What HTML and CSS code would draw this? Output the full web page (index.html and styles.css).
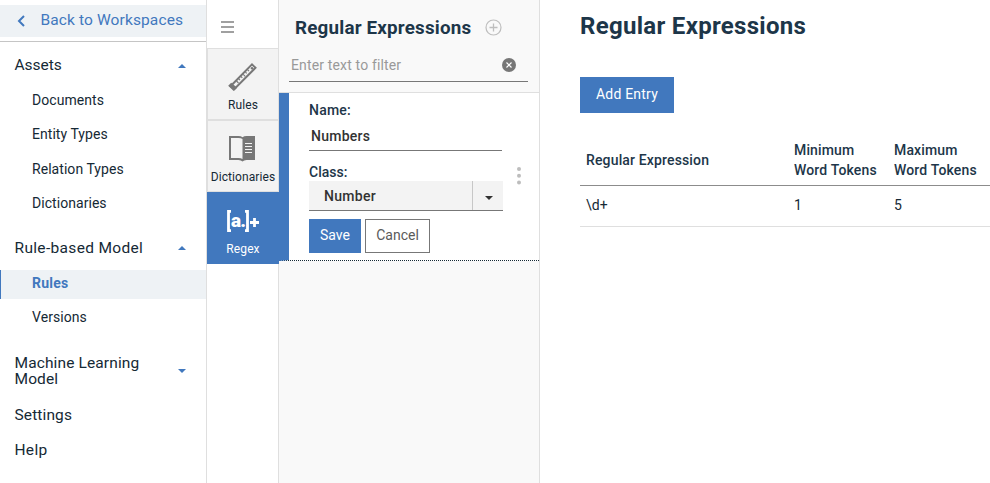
FILE: index.html
```html
<!DOCTYPE html>
<html lang="en">
<head>
<meta charset="utf-8">
<title>Regular Expressions</title>
<link rel="stylesheet" href="styles.css">
</head>
<body>
<div class="app">
  <nav class="sidebar">
    <a class="back"><svg class="chev" width="8" height="12" viewBox="0 0 8 12"><path d="M7 1 2 6l5 5" fill="none" stroke="#4178be" stroke-width="2"/></svg><span>Back to Workspaces</span></a>
    <div class="menu">
      <div class="head assets"><span>Assets</span><i class="caret up"></i></div>
      <ul>
        <li>Documents</li>
        <li>Entity Types</li>
        <li>Relation Types</li>
        <li>Dictionaries</li>
      </ul>
      <div class="head rb"><span>Rule-based Model</span><i class="caret up"></i></div>
      <ul>
        <li class="active">Rules</li>
        <li>Versions</li>
      </ul>
      <div class="head ml"><span>Machine Learning Model</span><i class="caret down"></i></div>
      <div class="head settings"><span>Settings</span></div>
      <div class="head help"><span>Help</span></div>
    </div>
  </nav>

  <div class="tabs">
    <div class="burger"><svg width="13" height="12" viewBox="0 0 13 12"><path d="M0 1h13M0 6h13M0 11h13" stroke="#a0a0a0" stroke-width="2"/></svg></div>
    <div class="tab t-rules">
      <svg width="32" height="32" viewBox="0 0 32 32"><path d="M3.500 25.200 25 3.300l3.500 3.500L7.200 28.200Z" fill="#f3f3f3" stroke="#777" stroke-width="2"/><path d="m1.200 24.700 3-3 6 5-3.500 3.300Z" fill="#777"/><path d="m9.500 20 2 2m.2-4.200 1.300 1.300m1-3.600 1.300 1.300m.9-3.500 2 2m.2-4.200 1.300 1.300m1-3.600 1.300 1.300" stroke="#777" stroke-width="1.100"/><circle cx="25" cy="7.200" r="1.200" fill="#777"/></svg>
      <span>Rules</span>
    </div>
    <div class="tab t-dict">
      <svg width="32" height="32" viewBox="0 0 32 32"><path d="M4 4h8q2.500 0 4 1.500V27q-1.500-1.500-4-1.500H4Z" fill="#f3f3f3"/><path d="M2 3h9.500q2.500 0 4 1.300Q17 3 19.500 3H28v24h-8.500q-2.500 0-4 1.500-1.500-1.500-4-1.500H2Zm2 2v20h7.500q2.500 0 4 1V6q-1.500-1-4-1Z" fill="#777"/><path d="M18 10.500h7m-7 3h7m-7 3h7m-7 3h7" stroke="#f3f3f3"/></svg>
      <span>Dictionaries</span>
    </div>
    <div class="tab t-regex">
      <div class="rx"><svg width="4" height="22" viewBox="0 0 4 22"><path d="M4 1.300H1.500v19.400H4" fill="none" stroke="#fff" stroke-width="2.800"/></svg><b>a.</b><svg width="4" height="22" viewBox="0 0 4 22"><path d="M0 1.300h2.500v19.400H0" fill="none" stroke="#fff" stroke-width="2.800"/></svg><svg class="plus" width="9" height="9" viewBox="0 0 9 9"><path d="M4.500 0v9M0 4.500h9" stroke="#fff" stroke-width="2.800"/></svg></div>
      <span>Regex</span>
    </div>
  </div>

  <section class="panel">
    <header class="ptop">
      <div class="ptitle"><h2>Regular Expressions</h2><svg width="17" height="17" viewBox="0 0 17 17"><circle cx="8.500" cy="8.500" r="7.500" fill="none" stroke="#bebebe" stroke-width="1.200"/><path d="M8.500 4.500v8M4.500 8.500h8" stroke="#bebebe" stroke-width="1.300"/></svg></div>
      <div class="filter"><span>Enter text to filter</span><svg width="14" height="14" viewBox="0 0 14 14"><circle cx="7" cy="7" r="7" fill="#777"/><path d="m4.500 4.500 5 5m0-5-5 5" stroke="#fff" stroke-width="1.200"/></svg></div>
    </header>
    <div class="entry">
      <div class="form">
        <label>Name:</label>
        <div class="input">Numbers</div>
        <label class="cl">Class:</label>
        <div class="select"><span>Number</span><div class="drop"><i class="caret dark"></i></div></div>
        <div class="btns"><div class="btn save">Save</div><div class="btn cancel">Cancel</div></div>
      </div>
      <svg class="dots" width="4" height="18" viewBox="0 0 4 18"><g fill="#bdbdbd"><circle cx="2" cy="2" r="2"/><circle cx="2" cy="8.700" r="2"/><circle cx="2" cy="15.400" r="2"/></g></svg>
    </div>
  </section>

  <main>
    <h1>Regular Expressions</h1>
    <div class="add">Add Entry</div>
    <div class="row th"><div>Regular Expression</div><div>Minimum<br>Word Tokens</div><div>Maximum<br>Word Tokens</div></div>
    <div class="row td"><div>\d+</div><div>1</div><div>5</div></div>
  </main>
</div>
</body>
</html>
```
FILE: styles.css
```css
* { box-sizing: border-box; }
body { margin: 0; font-family: Roboto, "Open Sans", sans-serif; color: #152935; background: #fff; }
h1, h2, ul { margin: 0; padding: 0; list-style: none; }
svg { display: block; flex: none; }
.app { display: flex; height: 483px; overflow: hidden; }

.sidebar { width: 207px; flex: none; border-right: 1px solid #dfdfdf; padding-top: 5px; }
.back { display: flex; align-items: center; height: 32px; background: #eef2f5; color: #4178be; font-size: 15.5px; line-height: 30px; letter-spacing: .12px; padding-left: 16.500px; padding-bottom: 2px; }
.back span { margin-left: 16px; }
.chev { margin-top: 2px; }
.menu { margin-top: 4px; border-top: 1px solid #c5c5c5; padding-top: 10px; }
.head { display: flex; align-items: center; justify-content: space-between; height: 26px; font-size: 15.5px; line-height: 16px; letter-spacing: .12px; padding: 0 20.500px 0 14.500px; }
.head span { max-width: 130px; }
.assets { letter-spacing: -.05px; }
.menu ul { padding-top: 9px; }
.menu li { height: 29px; margin-bottom: 5.3px; padding-left: 32px; font-size: 14px; line-height: 27px; letter-spacing: .05px; }
.menu li.active { background: #eef2f5; border-left: 1px solid #4178be; padding-left: 31px; color: #4178be; font-weight: 700; letter-spacing: .25px; }
.rb { margin-top: 16px; letter-spacing: .33px; }
.ml { margin-top: 22px; height: 32px; }
.settings { margin-top: 15px; }
.help { margin-top: 9px; letter-spacing: .3px; }
.caret { width: 0; height: 0; border: 4px solid transparent; }
.up { border-width: 0 4px 4px; border-bottom-color: #4178be; margin-top: 1px; }
.down { border-width: 4px 4px 0; border-top-color: #4178be; }

.tabs { width: 72px; flex: none; border-right: 1px solid #dfdfdf; }
.burger { height: 48px; padding: 21px 0 0 13.500px; }
.tab { width: 72px; height: 72px; background: #f3f3f3; border: 1px solid #dfdfdf; display: flex; flex-direction: column; align-items: center; font-size: 12px; line-height: 16px; letter-spacing: .1px; padding-top: 12px; }
.tab span { margin-top: 4px; }
.t-regex { background: #4178be; border-color: #4178be; color: #fff; }
.rx { display: flex; align-items: center; height: 32px; }
.rx b { font-size: 19px; font-weight: 900; line-height: 22px; letter-spacing: -.8px; }
.plus { margin-left: 1px; margin-top: 3px; }

.panel { width: 261px; flex: none; background: #f9f9f9; border-right: 1px solid #dfdfdf; }
.ptop { height: 93px; border-bottom: 1px solid #dfdfdf; padding: 13px 11px 0 10px; }
.ptitle { display: flex; align-items: center; height: 29px; padding-left: 6px; }
h2 { width: 189.500px; font-size: 18.8px; font-weight: 700; line-height: 28px; letter-spacing: .2px; color: #1d3649; white-space: nowrap; }
.filter { display: flex; justify-content: space-between; align-items: center; height: 34px; margin-top: 6px; border-bottom: 1px solid #777; color: #999; font-size: 14px; padding: 0 12px 0 2px; letter-spacing: .15px; }
.entry { display: flex; height: 168px; background: #fff; border-left: 10px solid #4178be; border-bottom: 1px dotted #152935; }
.form { width: 194px; margin-left: 20px; padding-top: 7px; }
label { display: block; font-size: 14px; font-weight: 500; line-height: 20px; letter-spacing: .2px; color: #1d3649; }
.input { width: 193px; height: 31px; border-bottom: 1px solid #777; padding: 1px 0 0 2px; font-size: 14px; font-weight: 500; line-height: 30px; letter-spacing: .25px; color: #323232; }
.cl { margin-top: 11px; height: 19px; letter-spacing: 0; }
.select { display: flex; height: 30px; border-bottom: 1px solid #777; background: #f3f3f3; font-size: 14px; font-weight: 500; line-height: 30px; letter-spacing: .3px; color: #323232; }
.select span { flex: 1; padding-left: 15px; }
.drop { width: 31px; border-left: 1px solid #c7c7c7; display: flex; align-items: center; justify-content: center; padding: 4px 0 0 2px; }
.dark { border-width: 4px 4px 0; border-top-color: #323232; }
.btns { display: flex; gap: 4px; margin-top: 8px; }
.btn { height: 34px; font-size: 14px; line-height: 31px; text-align: center; border: 1px solid #777; color: #5a5a5a; }
.save { width: 52px; background: #4178be; border-color: #4178be; color: #fff; }
.cancel { width: 65px; }
.dots { margin: 74px 0 0 14px; }

main { flex: 1; padding: 8px 0 0 40px; }
h1 { font-size: 24px; font-weight: 700; line-height: 36px; letter-spacing: .3px; color: #1d3649; }
.add { width: 94px; height: 36px; margin-top: 33px; background: #4178be; color: #fff; font-size: 14px; line-height: 34px; letter-spacing: .2px; text-align: center; }
.row { display: grid; grid-template-columns: 208px 100px 1fr; padding-left: 6px; font-size: 14px; align-items: center; }
.th { height: 73px; padding-top: 21px; font-weight: 500; line-height: 20px; letter-spacing: .15px; color: #1d3649; border-bottom: 1px solid #8c8c8c; }
.td { height: 41px; border-bottom: 1px solid #dfdfdf; padding-bottom: 2px; }
```
